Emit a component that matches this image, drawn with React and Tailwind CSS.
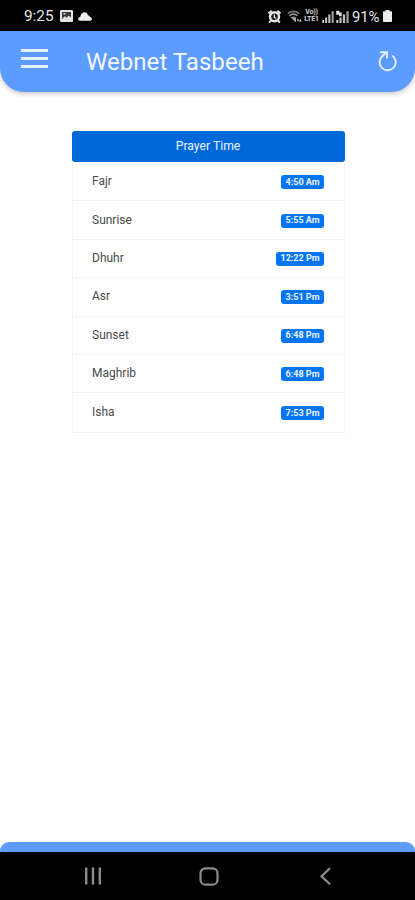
const prayers = [
  ["Fajr", "4:50 Am", "w-[43px]"],
  ["Sunrise", "5:55 Am", "w-[43px]"],
  ["Dhuhr", "12:22 Pm", "w-[48px]"],
  ["Asr", "3:51 Pm", "w-[43px]"],
  ["Sunset", "6:48 Pm", "w-[43px]"],
  ["Maghrib", "6:48 Pm", "w-[43px]"],
  ["Isha", "7:53 Pm", "w-[43px]"],
];

function PictureIcon() {
  return (
    <svg className="mt-[-1px] ml-[6px] h-[12px] w-[13px]" viewBox="0 0 13 12">
      <rect width="13" height="12" rx="1" fill="#e2e2e2" />
      <path d="M2 2h9v5.500L8.600 5.600 6.800 7.800 4.800 6.200 2 9z" fill="#3a3a3a" />
      <path d="M3.500 3h2v1.500h-2z" fill="#d0d0d0" />
    </svg>
  );
}

function CloudIcon() {
  return (
    <svg className="mt-[-1px] ml-[5px] h-[9px] w-[14px]" viewBox="0 0 14 9">
      <path d="M2 8.800C-.5 8.600-.4 5.400 2.200 5 2.700 2 4.500.3 6.500.3c1.900 0 3 1 3.500 2.900 1 .1 1.700.8 1.900 1.800 2.700.3 2.500 3.700.3 3.800z" fill="#ededed" />
    </svg>
  );
}

function AlarmIcon() {
  return (
    <svg className="h-[13px] w-[13px]" viewBox="0 0 13 13" fill="none" stroke="#e6e6e6">
      <circle cx="6.5" cy="6.800" r="4.500" fill="#111" strokeWidth="2.400" />
      <path d="M.5 3.400 3.600.7M12.500 3.400 9.400.7M2.900 10.600 1.100 12.600M10.100 10.600l1.800 2" strokeWidth="2" />
      <path d="M6.300 4.400v2.900l2 1.200" strokeWidth="1.300" />
    </svg>
  );
}

function WifiIcon() {
  return (
    <svg className="ml-[6px] h-[13px] w-[15px]" viewBox="0 0 15 13" fill="none">
      <path d="M.8 3.600C4 .6 8.800.6 12 3.600" stroke="#777" strokeWidth="1.700" />
      <path d="M2.400 5.800c2.400-2 5.600-2 8 0M4.300 8c1.300-.9 2.900-.9 4.200 0" stroke="#999" strokeWidth="1.600" />
      <path d="M4.600 8.600l4.400 3.600V8z" fill="#b0b0b0" />
      <path d="M9.800 9.400h2.400l-1.200 2.400zM12.200 11.600l1.200-2.600 1.200 2.600z" fill="#eee" />
    </svg>
  );
}

function VolteLabel() {
  return (
    <span className="ml-[2px] flex h-[14px] w-[15px] flex-col items-center text-[7px] leading-[7px] font-bold tracking-[-0.2px] text-[#d8d8d8]">
      <span>Vo))</span>
      <span>LTE1</span>
    </span>
  );
}

function SignalIcon({ second }) {
  return (
    <svg className={second ? "ml-[2px] h-[13px] w-[13px]" : "ml-[3px] h-[13px] w-[12px]"} viewBox="0 0 13 13" preserveAspectRatio="none">
      <path d="M.3 10H2.300V13H.3zM3.500 7.600h2V13h-2z" fill="#d2d2d2" />
      <path d="M6.800 4.400h2.300V13H6.800z" fill="#bdbdbd" />
      <path d="M10.400 1.200h2.300V13h-2.300z" fill="#9c9c9c" />
      {second && <path d="M.2.800h3.200v1.800h2.300v3.600H3V4.800H.2z" fill="#e0e0e0" />}
    </svg>
  );
}

function BatteryIcon() {
  return (
    <svg className="ml-[2px] h-[12px] w-[9px]" viewBox="0 0 9 12">
      <path d="M2.500 0h4v1.300H8.300q.7 0 .7.700v9.300q0 .7-.7.700H.7Q0 12 0 11.300V2q0-.7.700-.7h1.800z" fill="#ededed" />
    </svg>
  );
}

function RefreshIcon() {
  return (
    <svg className="mt-[-2px] h-[22px] w-[20px]" viewBox="0 0 20 22" fill="none" stroke="#e4eeff">
      <path d="M15.200 5.500A8.100 8.100 0 1 1 5.200 6.200L9 2.800" strokeWidth="1.900" />
      <path d="M3.200 2.200H10V8.500" strokeWidth="2" />
    </svg>
  );
}

export default function App() {
  return (
    <div className="flex h-[900px] w-full flex-col overflow-hidden bg-white font-[Roboto,sans-serif]">
      <div className="flex h-[31px] shrink-0 items-center bg-black pt-[2px] pr-[23px] pl-[24px] text-[#e8e8e8]">
        <span className="mt-[1px] w-[30px] text-[15.3px] leading-none whitespace-nowrap">9:25</span>
        <PictureIcon />
        <CloudIcon />
        <div className="ml-auto flex items-center">
          <AlarmIcon />
          <WifiIcon />
          <VolteLabel />
          <SignalIcon />
          <SignalIcon second />
          <span className="mt-[1px] ml-[3px] w-[29px] text-[14.8px] leading-none tracking-[-0.1px]">91%</span>
          <BatteryIcon />
        </div>
      </div>

      <header className="flex h-[61px] shrink-0 items-center rounded-b-[24px] bg-[#5c9bff] pr-[18px] pl-[21px] text-[#f2f7ff] shadow-[0_2px_5px_rgba(0,0,0,0.22)]">
        <div className="mt-[-6px] flex w-[27px] flex-col gap-[5px]">
          <div className="h-[3px] bg-[#e4eeff]" />
          <div className="h-[3px] bg-[#e4eeff]" />
          <div className="h-[3px] bg-[#e4eeff]" />
        </div>
        <h1 className="ml-[38px] text-[24.1px] leading-[28px] whitespace-nowrap">Webnet Tasbeeh</h1>
        <div className="ml-auto">
          <RefreshIcon />
        </div>
      </header>

      <main className="flex-1 pt-[39px] pl-[72px]">
        <div className="w-[273px]">
          <div className="flex h-[31px] items-center justify-center rounded-[3px] bg-[#0069d9] pr-[1px] pb-[1px] text-[12.2px] text-[#e9f3ff]">
            Prayer Time
          </div>
          <div className="border-x border-b border-[#f2f2f2] pt-[1px]">
            {prayers.map(([name, time, width]) => (
              <div key={name} className="flex h-[38.4px] items-center justify-between border-b border-[#f2f2f2] pr-[20px] pb-[1px] pl-[19px] last:border-b-0">
                <span className="text-[12px] leading-[16px] text-[#4a4a4a]">{name}</span>
                <span className={"mt-[2px] flex h-[14px] items-center justify-center rounded-[3px] bg-[#0275f2] text-[9px] leading-none font-bold whitespace-nowrap text-[#eaf4ff] " + width}>
                  {time}
                </span>
              </div>
            ))}
          </div>
        </div>
      </main>

      <div className="h-[10px] shrink-0 rounded-t-[9px] bg-[#5c9bff]" />
      <nav className="flex h-[48px] shrink-0 items-start bg-black pt-[15px] pl-[84px]">
        <svg className="h-[18px] w-[18px]" viewBox="0 0 18 18" fill="none" stroke="#8c8c8c" strokeWidth="2.400">
          <path d="M2.200.5v17M9 .5v17M15.800.5v17" />
        </svg>
        <svg className="ml-[97px] h-[19px] w-[20px]" viewBox="0 0 20 19" fill="none" stroke="#8c8c8c" strokeWidth="2.200">
          <rect x="1.500" y="1.300" width="17" height="16.400" rx="5" />
        </svg>
        <svg className="ml-[100px] h-[19px] w-[13px]" viewBox="0 0 13 19" fill="none" stroke="#8c8c8c" strokeWidth="2.200">
          <path d="M11 1.300 2.500 9.300l8.500 8" />
        </svg>
      </nav>
    </div>
  );
}
